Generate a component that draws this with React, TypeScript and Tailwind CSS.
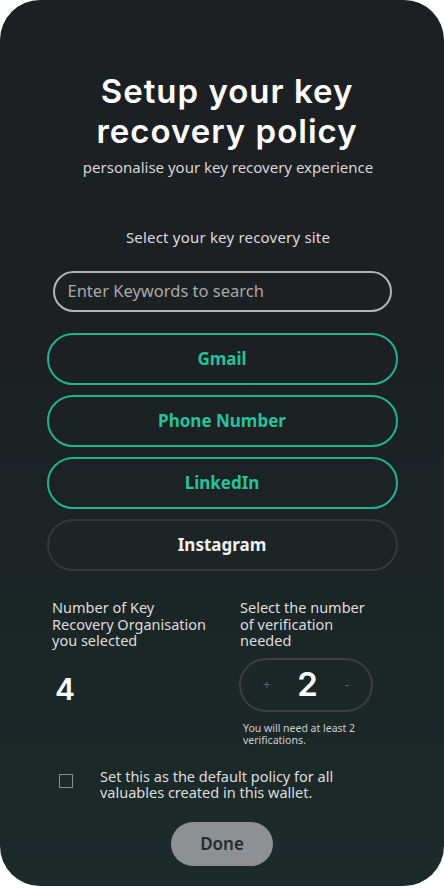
import React from "react";

const body = { fontFamily: '"Noto Sans", "Open Sans", sans-serif' };
const head = { fontFamily: 'Inter, "Noto Sans", sans-serif' };

function Option({ label, active }: { label: string; active: boolean }) {
  return (
    <button
      className={
        "h-[52px] w-full rounded-[26px] border-2 text-[17px] font-bold " +
        (active ? "border-[#1fb48d] text-[#27c29b]" : "border-[#34383a] text-[#f0f0f0]")
      }
      style={body}
    >
      {label}
    </button>
  );
}

export default function App() {
  return (
    <div className="w-[444px] h-[888px] bg-white">
      <div
        className="w-[444px] h-[886px] rounded-[40px] bg-gradient-to-b from-[#1c2023] from-40% to-[#1b2b2a] flex flex-col items-center text-white"
        style={body}
      >
        <h1
          className="mt-[71px] pl-[10px] text-[33px] leading-[40px] font-semibold text-center tracking-[1px]"
          style={head}
        >
          Setup your key
          <br />
          recovery policy
        </h1>
        <p className="mt-[6px] pl-[12px] text-[15px] text-[#d6d6d6] leading-[20px]">
          personalise your key recovery experience
        </p>
        <p className="mt-[50px] pl-[12px] text-[15px] tracking-[0.2px] text-[#dcdcdc] leading-[20px]">
          Select your key recovery site
        </p>
        <div className="mt-[24px] w-[339px] h-[41px] rounded-full border-2 border-[#b5b5b5] flex items-center pl-[13px]">
          <span className="text-[16.5px] text-[#a9a9a9]">Enter Keywords to search</span>
        </div>
        <div className="mt-[21px] w-[351px] flex flex-col gap-[10px]">
          <Option label="Gmail" active />
          <Option label="Phone Number" active />
          <Option label="LinkedIn" active />
          <Option label="Instagram" active={false} />
        </div>
        <div className="mt-[28px] w-[340px] flex">
          <div className="w-[188px]">
            <p className="text-[14.5px] leading-[16.5px] text-[#dedede]">
              Number of Key
              <br />
              Recovery Organisation
              <br />
              you selected
            </p>
            <div className="mt-[23px] pl-[3px] text-[30px] font-semibold leading-[34px] tracking-[1px]" style={head}>
              4
            </div>
          </div>
          <div className="flex-1">
            <p className="text-[14.5px] leading-[16.5px] text-[#dedede]">
              Select the number
              <br />
              of verification
              <br />
              needed
            </p>
            <div className="mt-[9px] -ml-[1px] w-[134px] h-[54px] rounded-full border-2 border-[#3b3f40] flex items-center justify-between px-[22px]">
              <span className="text-[13px] text-[#5d6263]">+</span>
              <span className="text-[33px] font-semibold leading-none" style={head}>2</span>
              <span className="text-[13px] text-[#5d6263]">-</span>
            </div>
            <p className="mt-[10px] pl-[3px] text-[10.5px] leading-[12px] text-[#d0d0d0]">
              You will need at least 2
              <br />
              verifications.
            </p>
          </div>
        </div>
        <div className="mt-[22px] w-[340px] flex items-start">
          <div className="ml-[7px] mt-[6px] w-[14px] h-[14px] border border-[#8a8c8d]" />
          <p className="ml-[27px] text-[14.5px] leading-[16.5px] text-[#dedede]">
            Set this as the default policy for all
            <br />
            valuables created in this wallet.
          </p>
        </div>
        <button className="mt-[21px] w-[102px] h-[44px] rounded-full bg-[#8e9194] text-[17px] font-semibold text-[#26292b]">
          Done
        </button>
      </div>
    </div>
  );
}
